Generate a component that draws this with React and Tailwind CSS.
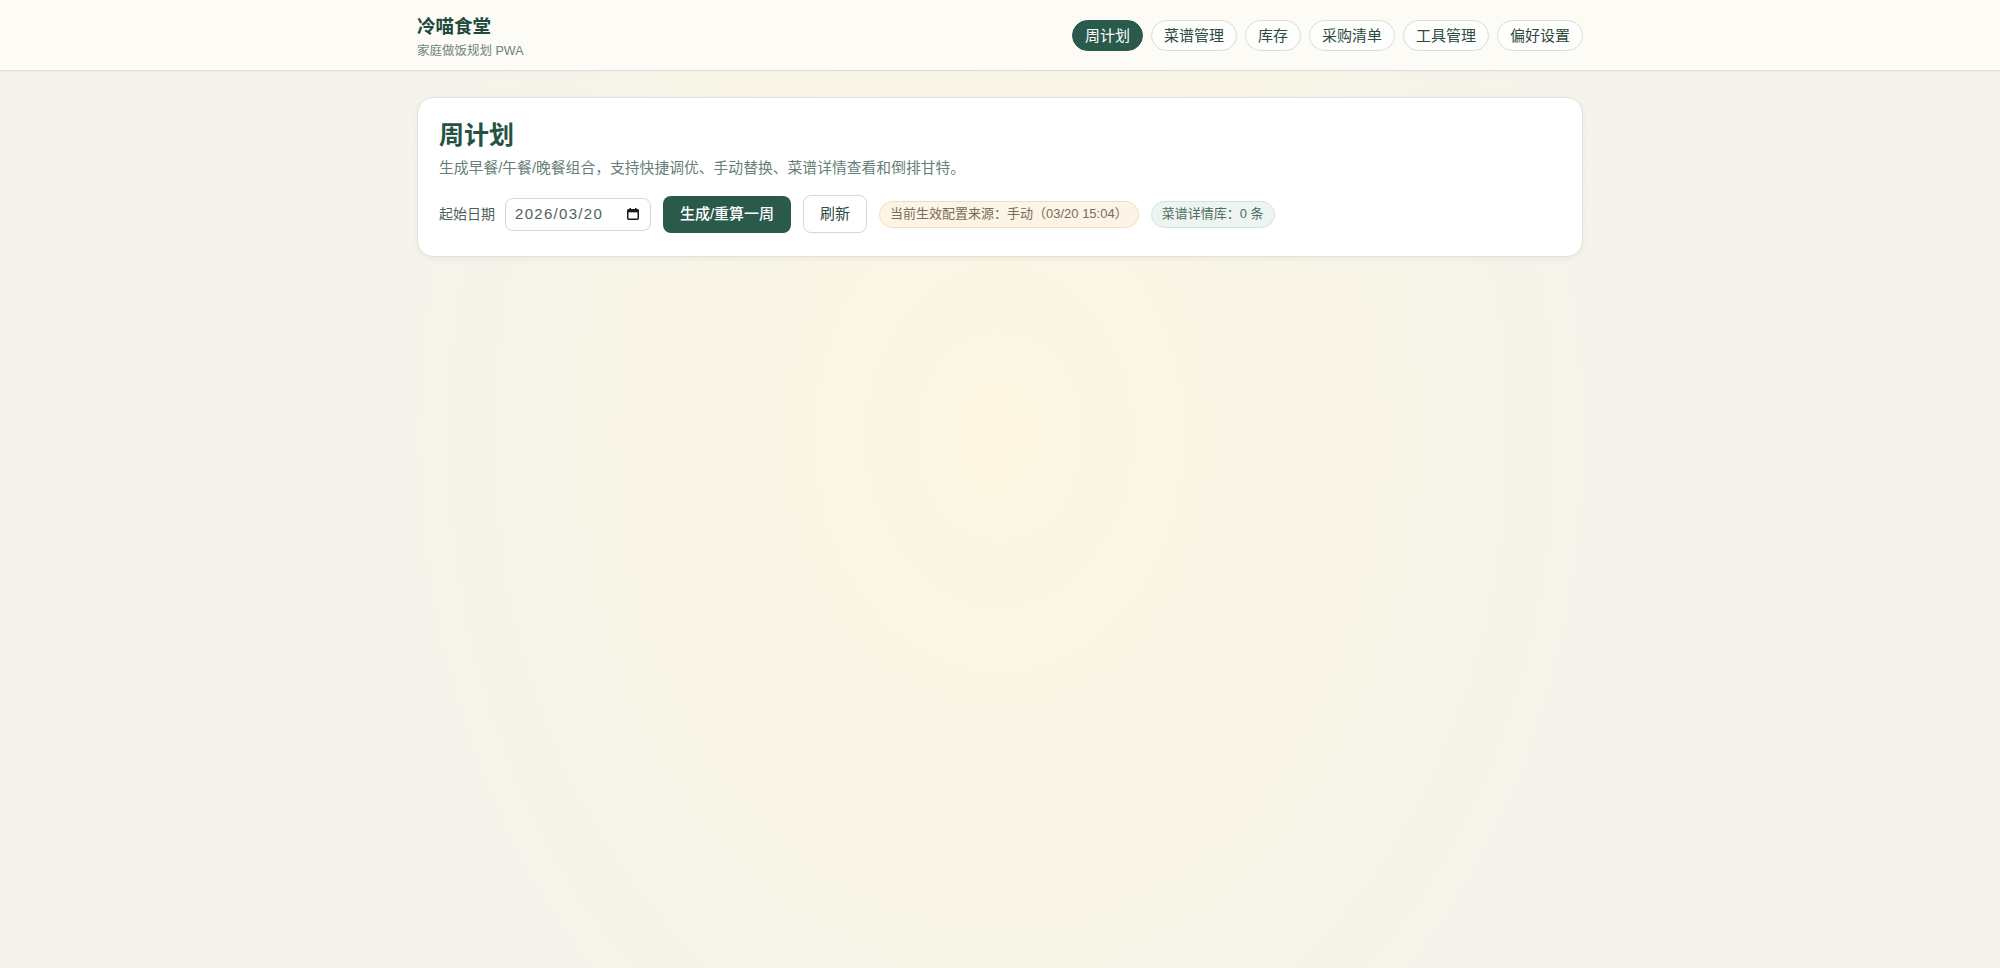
import React from "react";

const navItems = ["周计划", "菜谱管理", "库存", "采购清单", "工具管理", "偏好设置"];

function CalendarGlyph() {
  return (
    <svg width="12" height="12" viewBox="0 0 12 12" className="shrink-0">
      <rect x="0.75" y="1.75" width="10.5" height="9.5" rx="1" fill="none" stroke="#1a1a1a" strokeWidth="1.5" />
      <rect x="0.75" y="1.75" width="10.5" height="2.6" fill="#1a1a1a" />
      <rect x="2.5" y="0" width="1.5" height="2.5" fill="#1a1a1a" />
      <rect x="8" y="0" width="1.5" height="2.5" fill="#1a1a1a" />
    </svg>
  );
}

export default function App() {
  return (
    <div
      className="min-h-[968px] w-full bg-[#f4f3ec] bg-[radial-gradient(ellipse_34%_90%_at_50%_45%,#fcf6e2_0%,#f9f5e7_45%,rgba(244,243,236,0)_100%)]"
      style={{ fontFamily: '"Liberation Sans", "Noto Sans CJK SC", sans-serif' }}
    >
      <header className="h-[71px] w-full border-b border-[#e0ddd4] bg-[#fdfbf5] shadow-[0_1px_2px_rgba(0,0,0,0.03)]">
        <div className="mx-auto flex h-full max-w-[1166px] items-center justify-between">
          <div className="flex flex-col pt-[3px]">
            <div className="text-[18.5px] font-bold leading-[24px] text-[#1f4a3d]">冷喵食堂</div>
            <div className="mt-[4px] text-[12.5px] leading-[16px] text-[#6f837c]">家庭做饭规划 PWA</div>
          </div>
          <nav className="flex items-center gap-2">
            {navItems.map((item, i) =>
              i === 0 ? (
                <button
                  key={item}
                  className="h-[31px] rounded-full border border-[#2a5a4c] bg-[#2a5a4c] px-3 text-[15px] leading-none text-white"
                >
                  {item}
                </button>
              ) : (
                <button
                  key={item}
                  className="h-[31px] rounded-full border border-[#d9dedb] bg-[#fefefd] px-3 text-[15px] leading-none text-[#2c4a41]"
                >
                  {item}
                </button>
              )
            )}
          </nav>
        </div>
      </header>

      <main className="mx-auto max-w-[1166px] pt-[26px]">
        <section className="rounded-2xl border border-[#e2e2dd] bg-white px-[21px] pb-[23px] pt-[22px] shadow-[0_2px_6px_rgba(0,0,0,0.05)]">
          <h1 className="text-[25px] font-bold leading-[30px] text-[#245244]">周计划</h1>
          <p className="mt-[8px] text-[14.8px] leading-[20px] text-[#667f77]">
            生成早餐/午餐/晚餐组合，支持快捷调优、手动替换、菜谱详情查看和倒排甘特。
          </p>
          <div className="mt-[17px] flex items-center gap-3">
            <div className="flex items-center gap-[10px]">
              <span className="text-[14px] leading-5 text-[#4d625b]">起始日期</span>
              <div className="flex h-[33px] w-[146px] items-center justify-between rounded-lg border border-[#d3d8d5] bg-white pl-[9px] pr-[11px]">
                <span className="text-[15px] tracking-[1.3px] text-[#4f625c]">2026/03/20</span>
                <CalendarGlyph />
              </div>
            </div>
            <button className="h-[37px] w-[128px] rounded-lg bg-[#2a5a4c] text-[15px] font-medium text-white">
              生成/重算一周
            </button>
            <button className="h-[38px] w-[64px] rounded-lg border border-[#d4d8d6] bg-white text-[15px] text-[#2c4a41]">
              刷新
            </button>
            <span className="flex h-[27px] items-center rounded-full border border-[#f1dcc1] bg-[#fdf4e8] px-[10px] text-[13px] text-[#7c6b55]">
              当前生效配置来源：手动（03/20 15:04）
            </span>
            <span className="flex h-[27px] items-center rounded-full border border-[#d3e3dc] bg-[#eef5f1] px-[10px] text-[13px] text-[#4f6c63]">
              菜谱详情库：0 条
            </span>
          </div>
        </section>
      </main>
    </div>
  );
}
